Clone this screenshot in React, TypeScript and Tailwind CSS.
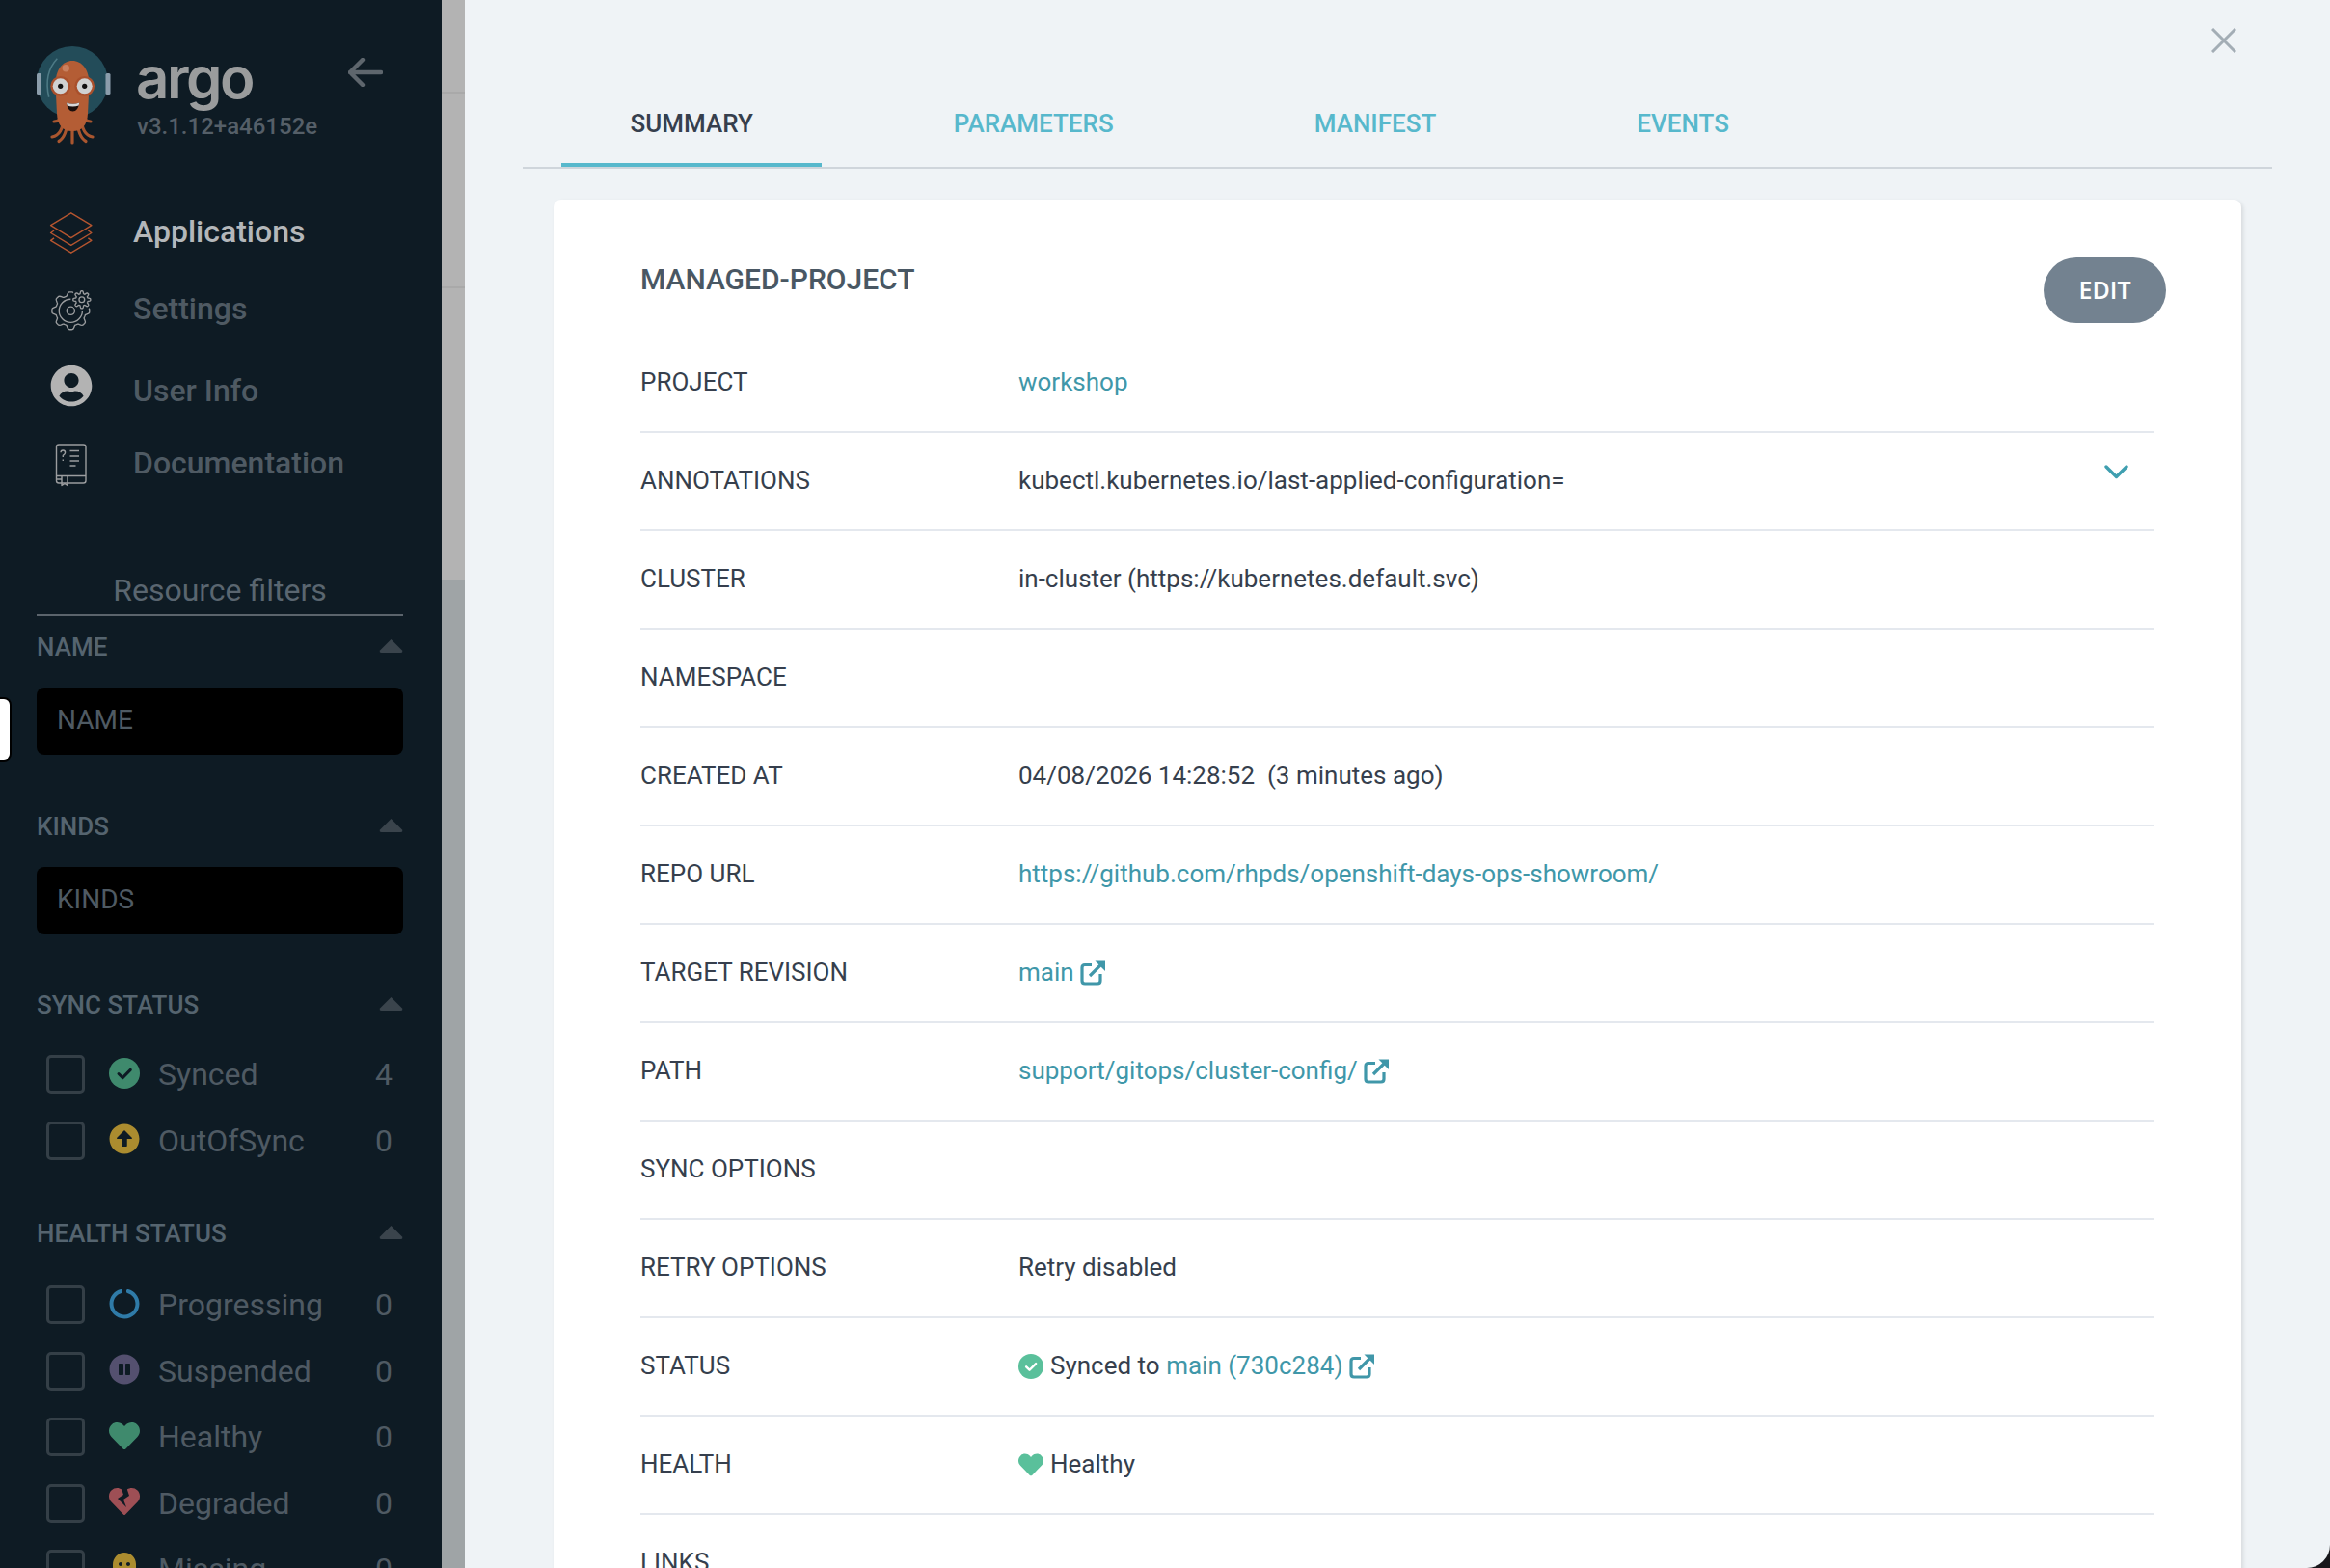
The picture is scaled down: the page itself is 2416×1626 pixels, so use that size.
import React from 'react';
import {
  FaArrowAltCircleUp,
  FaCircleNotch,
  FaGhost,
  FaHeart,
  FaHeartBroken,
  FaPauseCircle,
  FaUserCircle,
} from 'react-icons/fa';

const gearPath = (cx: number, cy: number, r: number, a: number, teeth: number) => {
  const pts: string[] = [];
  for (let i = 0; i < 144; i++) {
    const t = (i / 144) * Math.PI * 2;
    const rr = r + a * Math.max(-1, Math.min(1, 1.6 * Math.cos(teeth * t)));
    pts.push(`${(cx + rr * Math.cos(t)).toFixed(2)} ${(cy + rr * Math.sin(t)).toFixed(2)}`);
  }
  return `M${pts.join('L')}Z`;
};

const ArgoLogo = () => (
  <svg viewBox="36 46 80 104" className="w-[80px] h-[104px] shrink-0">
    <circle cx="75" cy="85" r="37" fill="#234c59" />
    <path d="M59.3 60.7Q45 76 50.7 100.7" fill="none" stroke="#4d7a85" strokeWidth="1.6" />
    <rect x="38" y="76" width="5" height="22" rx="1.5" fill="#8b9dab" />
    <rect x="109.5" y="76" width="5" height="22" rx="1.5" fill="#8b9dab" />
    <g fill="none" stroke="#a9562f" strokeWidth="3.2" strokeLinecap="round">
      <path d="M64 118Q63 126 56 126" />
      <path d="M66 122Q65 140 54 142" />
      <path d="M70 124Q69 142 61 146.5" />
      <path d="M75 124V148" />
      <path d="M80 124Q81 142 89 146.5" />
      <path d="M84 122Q85 140 96 142" />
      <path d="M86 118Q87 126 94 126" />
    </g>
    <path
      d="M57.5 88C57.5 72 65 63 75 63C85 63 92.5 72 92.5 88L91 118Q90 136 75 136Q60 136 59 118Z"
      fill="#b45d35"
    />
    <circle cx="68.3" cy="70.7" r="3.7" fill="#c8805f" />
    <circle cx="62.7" cy="89.3" r="10.4" fill="#a9502c" />
    <circle cx="87.7" cy="89.3" r="10.4" fill="#a9502c" />
    <circle cx="62.7" cy="89.3" r="8" fill="#cfd1d1" />
    <circle cx="87.7" cy="89.3" r="8" fill="#cfd1d1" />
    <circle cx="62.7" cy="89.3" r="2.6" fill="#111" />
    <circle cx="87.7" cy="89.3" r="2.6" fill="#111" />
    <path d="M69 106.5Q75.5 109 82.3 106.5Q81 115.5 75.5 115.5Q70 115.5 69 106.5Z" fill="#1a0f0c" />
    <path d="M69 106.5Q75.5 109 82.3 106.5L81.6 109.5Q75.5 111.5 69.7 109.5Z" fill="#d8d8d8" />
  </svg>
);

const StackIcon = () => (
  <svg viewBox="49 217 50 49" className="w-[50px] h-[49px] mt-[3px]" fill="none" stroke="#b5552f" strokeWidth="1.5" strokeLinejoin="round">
    <path d="M73.7 219L96.7 233L73.7 247L50.7 233Z" />
    <path d="M54.5 238.8L50.7 241.5L73.7 255.5L96.7 241.5L92.9 238.8" />
    <path d="M54.5 247.3L50.7 250L73.7 264L96.7 250L92.9 247.3" />
  </svg>
);

const GearsIcon = () => (
  <svg viewBox="50 298 48 48" className="w-[48px] h-[48px] mt-[4px]" fill="none" stroke="#9b9d9f" strokeWidth="1.4">
    <path d={gearPath(73.3, 322.3, 18.3, 2, 8)} />
    <circle cx="73.3" cy="322.3" r="12.6" />
    <circle cx="73.3" cy="322.3" r="4.3" />
    <circle cx="85.3" cy="310.3" r="12" fill="#0e1b24" stroke="none" />
    <path d={gearPath(85.3, 310.3, 8, 1.4, 8)} />
    <circle cx="85.3" cy="310.3" r="3" />
  </svg>
);

const BookIcon = () => (
  <svg viewBox="57 459 36 46" className="w-[36px] h-[46px] mt-[3px]" fill="none" stroke="#9b9d9f" strokeWidth="1.4" strokeLinejoin="round">
    <rect x="59.5" y="461" width="30.5" height="40" rx="2.5" />
    <path d="M59.5 493.5H90M60 497H65" />
    <path d="M65 493.5V503.5L68 501.5L71 503.5V493.5" />
    <path d="M73.5 467.5H83M73.5 473H83M73.5 478H83M73.5 483H79.5" />
    <path d="M64 469.2Q64 467 66.3 467Q68.6 467 68.6 469.2Q68.6 471 66.3 472.3V474" />
    <path d="M66.3 476.5V478" />
  </svg>
);

const CheckCircle = ({ color, tick, size }: { color: string; tick: string; size: number }) => (
  <svg viewBox="0 0 32 32" width={size} height={size} className="shrink-0">
    <circle cx="16" cy="16" r="16" fill={color} />
    <path d="M10 16.5L14.2 20.6L22.3 12.4" fill="none" stroke={tick} strokeWidth="3" strokeLinecap="round" strokeLinejoin="round" />
  </svg>
);

const ExternalLink = () => (
  <svg viewBox="0 0 27 27" className="w-[27px] h-[27px] shrink-0" fill="none" stroke="#4097a9" strokeWidth="3.2">
    <path d="M12 5.5H5Q2 5.5 2 8.5V22Q2 25 5 25H18Q21 25 21 22V15" />
    <path d="M10 17L22 5" />
    <path d="M15.5 1.5H26V12Z" fill="#4097a9" stroke="none" />
  </svg>
);

const Caret = () => (
  <svg viewBox="0 0 25 15" className="w-[25px] h-[15px] -mt-[2px]">
    <path d="M12.5 1L24 12.5Q25 15 22.5 15H2.5Q0 15 1 12.5Z" fill="#3a444c" />
  </svg>
);

const FilterHeading = ({ title }: { title: string }) => (
  <div className="flex items-center justify-between h-[32px] text-[26px] font-medium text-[#55646f]">
    <span className="pt-[2px]">{title}</span>
    <Caret />
  </div>
);

const FilterInput = ({ placeholder }: { placeholder: string }) => (
  <div className="mt-[27px] h-[70px] rounded-[8px] bg-black pl-[21px] pr-4 flex items-center text-[28px] text-[#4f5a63]">
    <span className="-mt-[3px]">{placeholder}</span>
  </div>
);

const FilterRow = ({ icon, label, count }: { icon: React.ReactNode; label: string; count: number }) => (
  <div className="flex items-center h-[68.5px] pl-[10px] pr-[11px]">
    <div className="w-[40px] h-[40px] rounded-[5px] border-[3px] border-[#343f47] shrink-0" />
    <div className="w-[32px] ml-[25px] mr-[19px] flex justify-center -mt-[3px] text-[32px]">{icon}</div>
    <span className="flex-1 text-[32px] text-[#4f5a63]">{label}</span>
    <span className="text-[32px] text-[#4f5a63]">{count}</span>
  </div>
);

const NavItem = ({
  icon,
  label,
  className,
  textClass,
}: {
  icon: React.ReactNode;
  label: string;
  className: string;
  textClass: string;
}) => (
  <div className={`flex items-center ${className}`}>
    <div className="w-[46px] flex justify-center shrink-0">{icon}</div>
    <span className={`ml-[41px] text-[32px] font-medium ${textClass}`}>{label}</span>
  </div>
);

const Link = ({ children }: { children: React.ReactNode }) => <span className="text-[#4097a9]">{children}</span>;

const rows: { label: string; value?: React.ReactNode; chevron?: boolean }[] = [
  { label: 'PROJECT', value: <Link>workshop</Link> },
  { label: 'ANNOTATIONS', value: 'kubectl.kubernetes.io/last-applied-configuration=', chevron: true },
  { label: 'CLUSTER', value: 'in-cluster (https://kubernetes.default.svc)' },
  { label: 'NAMESPACE' },
  { label: 'CREATED AT', value: <span className="whitespace-pre">04/08/2026 14:28:52  (3 minutes ago)</span> },
  { label: 'REPO URL', value: <Link>https://github.com/rhpds/openshift-days-ops-showroom/</Link> },
  {
    label: 'TARGET REVISION',
    value: (
      <span className="flex items-center gap-[6px]">
        <Link>main</Link>
        <ExternalLink />
      </span>
    ),
  },
  {
    label: 'PATH',
    value: (
      <span className="flex items-center gap-[6px]">
        <Link>support/gitops/cluster-config/</Link>
        <ExternalLink />
      </span>
    ),
  },
  { label: 'SYNC OPTIONS' },
  { label: 'RETRY OPTIONS', value: 'Retry disabled' },
  {
    label: 'STATUS',
    value: (
      <span className="flex items-center gap-[7px]">
        <CheckCircle color="#5ac09b" tick="#ffffff" size={26} />
        <span>
          Synced to <Link>main (730c284)</Link>
        </span>
        <ExternalLink />
      </span>
    ),
  },
  {
    label: 'HEALTH',
    value: (
      <span className="flex items-center gap-[7px]">
        <FaHeart className="text-[26px] text-[#5ac09b]" />
        Healthy
      </span>
    ),
  },
  { label: 'LINKS' },
];

const App = () => {
  return (
    <div className="relative flex h-[1626px] w-[2416px] overflow-hidden bg-[#17171b] font-['Roboto',sans-serif]">
      <aside className="w-[458px] h-full shrink-0 bg-[#0e1b24]">
        <div className="flex pt-[46px] pl-[36px] pr-[61px] h-[199px]">
          <ArgoLogo />
          <div className="ml-[25px]">
            <div className="h-[64px] mt-[2px] text-[60px] leading-[64px] font-semibold tracking-[-2.5px] text-[#9a9c9d] font-['Inter',sans-serif]">
              argo
            </div>
            <div className="mt-[3px] ml-[1px] text-[24px] leading-[32px] font-medium text-[#555f68]">v3.1.12+a46152e</div>
          </div>
          <svg viewBox="0 0 36 30" className="ml-auto mt-[14px] w-[36px] h-[30px] shrink-0" fill="none" stroke="#5e666d" strokeWidth="4.4" strokeLinecap="round" strokeLinejoin="round">
            <path d="M15 2L2 15L15 28M2 15H34" />
          </svg>
        </div>
        <div className="pl-[51px]">
          <NavItem icon={<StackIcon />} label="Applications" className="h-[81px]" textClass="text-[#b4b7ba]" />
          <NavItem icon={<GearsIcon />} label="Settings" className="h-[80px]" textClass="text-[#4f5a63]" />
          <NavItem
            icon={<FaUserCircle className="text-[44px] text-[#b3b3b3] -mt-[1px]" />}
            label="User Info"
            className="h-[81px]"
            textClass="text-[#4f5a63] mt-[9px]"
          />
          <NavItem icon={<BookIcon />} label="Documentation" className="h-[78px]" textClass="text-[#4f5a63]" />
        </div>
        <div className="ml-[38px] mr-[40px]">
          <div className="mt-[73px] pb-[5px] border-b-2 border-[#5b646c] text-center text-[32px] leading-[40px] text-[#5a6670]">
            Resource filters
          </div>
          <div className="mt-[15px]">
            <FilterHeading title="NAME" />
          </div>
          <FilterInput placeholder="NAME" />
          <div className="mt-[57px]">
            <FilterHeading title="KINDS" />
          </div>
          <FilterInput placeholder="KINDS" />
          <div className="mt-[56px]">
            <FilterHeading title="SYNC STATUS" />
          </div>
          <div className="mt-[23px]">
            <FilterRow icon={<CheckCircle color="#3f8a6d" tick="#0e1b24" size={32} />} label="Synced" count={4} />
            <FilterRow icon={<FaArrowAltCircleUp className="text-[#ab8c2f]" />} label="OutOfSync" count={0} />
          </div>
          <div className="mt-[45px]">
            <FilterHeading title="HEALTH STATUS" />
          </div>
          <div className="mt-[25px]">
            <FilterRow icon={<FaCircleNotch className="text-[#2f7ba8]" />} label="Progressing" count={0} />
            <FilterRow icon={<FaPauseCircle className="text-[#54506f]" />} label="Suspended" count={0} />
            <FilterRow icon={<FaHeart className="text-[#3f8a6d]" />} label="Healthy" count={0} />
            <FilterRow icon={<FaHeartBroken className="text-[#9e4f55]" />} label="Degraded" count={0} />
            <FilterRow icon={<FaGhost className="text-[#ab8c2f]" />} label="Missing" count={0} />
          </div>
        </div>
      </aside>

      <div className="w-[24px] h-full shrink-0 flex flex-col bg-[#9fa4a6]">
        <div className="h-[97px] bg-[#b3b3b3] border-b-2 border-[#a9a9a9]" />
        <div className="h-[202px] bg-[#b3b3b3] border-b-2 border-[#a9a9a9]" />
        <div className="h-[302px] bg-[#b3b3b3]" />
      </div>

      <main className="flex-1 h-full overflow-hidden rounded-br-[24px] bg-[#eff3f6]">
        <div className="flex justify-end h-[83px] pt-[29px] pr-[97px]">
          <svg viewBox="0 0 26 26" className="w-[26px] h-[26px]" fill="none" stroke="#a3adb5" strokeWidth="3">
            <path d="M1 1L25 25M25 1L1 25" />
          </svg>
        </div>
        <div className="mx-[60px] pl-[40px] flex gap-[65px] border-b-2 border-[#cfd5db] text-[26px] font-medium text-[#57b8cc]">
          <div className="h-[90px] px-[71.5px] pt-[4px] flex items-center border-b-4 border-[#57b8cc] text-[#363f4d]">SUMMARY</div>
          <div className="h-[90px] px-[71.5px] pt-[4px] flex items-center border-b-4 border-transparent">PARAMETERS</div>
          <div className="h-[90px] px-[71.5px] pt-[4px] flex items-center border-b-4 border-transparent">MANIFEST</div>
          <div className="h-[90px] px-[71.5px] pt-[4px] flex items-center border-b-4 border-transparent">EVENTS</div>
        </div>
        <div className="mt-[32px] mx-[92px] px-[90px] pt-[59px] rounded-[8px] bg-white shadow-[2px_2px_4px_rgba(0,0,0,0.1)]">
          <div className="flex items-start justify-between h-[81px]">
            <div className="text-[30px] leading-[48px] font-medium text-[#495763]">MANAGED-PROJECT</div>
            <div className="w-[127px] h-[68px] pb-[1px] mt-[1px] -mr-[12px] rounded-full bg-[#738290] flex items-center justify-center text-[25px] font-semibold text-white font-['Open_Sans',sans-serif]">
              EDIT
            </div>
          </div>
          {rows.map((row) => (
            <div key={row.label} className="flex items-center h-[102px] border-b-2 border-[#e4e8ee] text-[26px] text-[#363f4d]">
              <div className="w-[392px] shrink-0 pb-[1px]">{row.label}</div>
              <div className="flex-1 flex items-center justify-between pb-[1px]">
                {row.value}
                {row.chevron && (
                  <svg viewBox="0 0 25 15" className="w-[25px] h-[15px] mr-[27px] mb-[18px]" fill="none" stroke="#3f9fb0" strokeWidth="3.4" strokeLinecap="round" strokeLinejoin="round">
                    <path d="M2 2L12.5 12.5L23 2" />
                  </svg>
                )}
              </div>
            </div>
          ))}
        </div>
      </main>

      <div className="absolute left-0 top-[723px] w-[12px] h-[67px] rounded-r-[8px] bg-white border-2 border-l-0 border-black" />
    </div>
  );
};

export default App;
